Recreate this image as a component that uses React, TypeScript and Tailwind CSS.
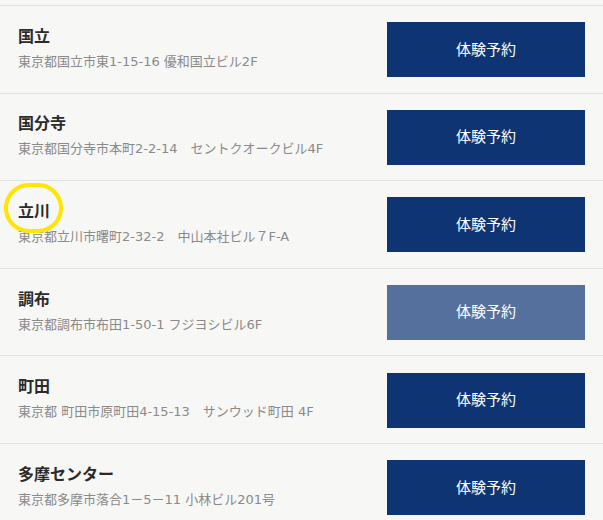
import React from "react";

type Studio = {
  name: string;
  address: string;
  hover?: boolean;
  marked?: boolean;
};

const studios: Studio[] = [
  { name: "国立", address: "東京都国立市東1-15-16 優和国立ビル2F" },
  { name: "国分寺", address: "東京都国分寺市本町2-2-14　セントクオークビル4F" },
  { name: "立川", address: "東京都立川市曙町2-32-2　中山本社ビル７F-A", marked: true },
  { name: "調布", address: "東京都調布市布田1-50-1 フジヨシビル6F", hover: true },
  { name: "町田", address: "東京都 町田市原町田4-15-13　サンウッド町田 4F" },
  { name: "多摩センター", address: "東京都多摩市落合1－5－11 小林ビル201号" },
];

const App = () => {
  return (
    <div
      className="w-[603px] h-[520px] overflow-hidden bg-[#f7f7f5]"
      style={{ fontFamily: '"DejaVu Sans", "Noto Sans CJK JP", sans-serif' }}
    >
      <div className="h-[5px]" />
      {studios.map((s) => (
        <div
          key={s.name}
          className="h-[87.6px] border-t border-[#e2e2e0] flex items-center justify-between pl-[18px] pr-[18px]"
        >
          <div className="relative flex flex-col">
            <span className="text-[16px] leading-[22px] font-bold text-[#2b2b2b] -mt-[2px]">{s.name}</span>
            <span className="text-[13px] leading-[18px] text-[#8a8a8a] mt-[5px]">{s.address}</span>
            {s.marked && (
              <div className="absolute left-[-14px] top-[-20px] w-[59px] h-[50px] rounded-full border-[4px] border-[#ffe500]" />
            )}
          </div>
          <button
            className={
              "w-[198px] h-[55px] mt-[1px] text-white text-[15px] " +
              (s.hover ? "bg-[#55709d]" : "bg-[#0e3473]")
            }
          >
            体験予約
          </button>
        </div>
      ))}
    </div>
  );
};

export default App;
